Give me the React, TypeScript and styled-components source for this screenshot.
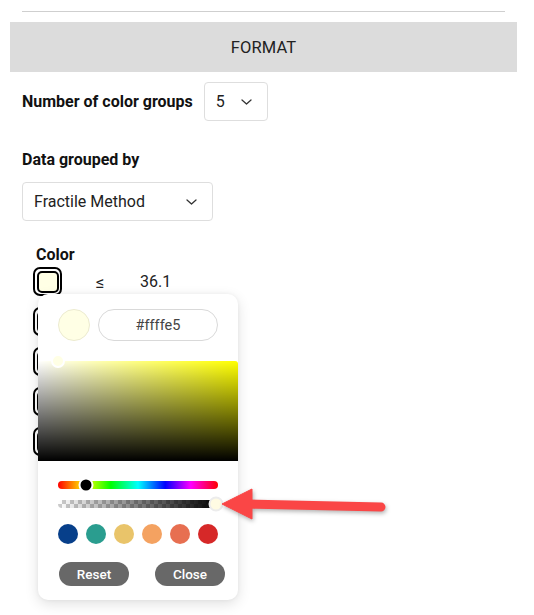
import React from "react";
import styled, { createGlobalStyle } from "styled-components";

const Global = createGlobalStyle`
  html, body { margin: 0; padding: 0; background: #fff; }
  body { font-family: Roboto, "Liberation Sans", Arial, sans-serif; color: #1a1a1a; }
`;

const Page = styled.div`
  position: relative;
  width: 534px;
  height: 615px;
  overflow: hidden;
  padding-top: 11px;
  box-sizing: border-box;
`;

const Rule = styled.div`
  height: 1px;
  background: #cfcfcf;
  margin: 0 29px 0 22px;
`;

const Header = styled.div`
  margin: 10px 17px 0 10px;
  height: 50px;
  background: #dcdcdc;
  display: flex;
  align-items: center;
  justify-content: center;
  font-size: 16.5px;
  color: #222;
  letter-spacing: 0.1px;
`;

const Body = styled.div`
  padding: 10px 0 0 22px;
  display: flex;
  flex-direction: column;
`;

const InlineRow = styled.div`
  display: flex;
  align-items: center;
  gap: 11px;
`;

const Label = styled.div<{ $indent?: number }>`
  font-weight: 700;
  font-size: 16px;
  color: #111;
  line-height: 20px;
  margin-left: ${(p) => p.$indent ?? 0}px;
`;

const Select = styled.div<{ $w: number }>`
  width: ${(p) => p.$w}px;
  height: 39px;
  box-sizing: border-box;
  border: 1px solid #dedede;
  border-radius: 4px;
  display: flex;
  align-items: center;
  justify-content: space-between;
  padding: 0 15px 0 11px;
  font-size: 16px;
  color: #222;
`;

const Chevron = () => (
  <svg width="11" height="6" viewBox="0 0 11 6" fill="none">
    <path d="M1 1l4.5 4L10 1" stroke="#333" strokeWidth="1.3" strokeLinecap="round" strokeLinejoin="round" />
  </svg>
);

const Section = styled.div<{ $top: number; $gap: number }>`
  margin-top: ${(p) => p.$top}px;
  display: flex;
  flex-direction: column;
  gap: ${(p) => p.$gap}px;
`;

const ColorList = styled.div`
  display: flex;
  flex-direction: column;
  gap: 11px;
  margin-left: 11px;
`;

const SwatchRow = styled.div`
  display: flex;
  align-items: center;
  height: 29px;
`;

const Swatch = styled.div<{ $c: string }>`
  width: 29px;
  height: 29px;
  box-sizing: border-box;
  border: 2px solid #000;
  border-radius: 7px;
  padding: 1.5px;
  background: #fff;
  flex: none;
  &::after {
    content: "";
    display: block;
    width: 100%;
    height: 100%;
    box-sizing: border-box;
    border: 2px solid #000;
    border-radius: 5px;
    background: ${(p) => p.$c};
  }
`;

const Le = styled.span`
  margin-left: 34px;
  font-size: 17px;
  width: 10px;
  color: #222;
`;

const Value = styled.span`
  margin-left: 34px;
  font-size: 16px;
  color: #222;
`;

const Popup = styled.div`
  position: absolute;
  left: 38px;
  top: 294px;
  width: 200px;
  height: 306px;
  background: #fff;
  border-radius: 10px;
  box-shadow: 0 4px 14px rgba(0, 0, 0, 0.12), 0 0 4px rgba(0, 0, 0, 0.05);
  display: flex;
  flex-direction: column;
`;

const PopTop = styled.div`
  display: flex;
  align-items: center;
  gap: 8px;
  padding: 15px 20px 0 20px;
  height: 32px;
`;

const Preview = styled.div<{ $c: string }>`
  width: 32px;
  height: 32px;
  border-radius: 50%;
  box-sizing: border-box;
  border: 1px solid #ecebd0;
  background: ${(p) => p.$c};
  flex: none;
`;

const HexInput = styled.div`
  flex: 1;
  height: 32px;
  box-sizing: border-box;
  border: 1px solid #d9d9d9;
  border-radius: 16px;
  display: flex;
  align-items: center;
  justify-content: center;
  font-size: 14.5px;
  color: #444;
`;

const Saturation = styled.div`
  position: relative;
  margin-top: 20px;
  height: 100px;
  border-top-right-radius: 3px;
  background: linear-gradient(to top, #000, rgba(0, 0, 0, 0)),
    linear-gradient(to right, #fff, rgba(255, 255, 255, 0)), #ffff00;
`;

const Pointer = styled.div<{ $c: string; $size: number; $ring: string }>`
  position: absolute;
  width: ${(p) => p.$size}px;
  height: ${(p) => p.$size}px;
  border-radius: 50%;
  box-sizing: border-box;
  background: ${(p) => p.$c};
  border: 2px solid ${(p) => p.$ring};
  transform: translate(-50%, -50%);
`;

const Sliders = styled.div`
  display: flex;
  flex-direction: column;
  gap: 11px;
  padding: 20px 20px 0 20px;
`;

const Track = styled.div<{ $bg: string }>`
  position: relative;
  height: 8px;
  border-radius: 4px;
  background: ${(p) => p.$bg};
`;

const hue =
  "linear-gradient(to right, #f00 0%, #ff0 17%, #0f0 33%, #0ff 50%, #00f 67%, #f0f 83%, #f00 100%)";
const alpha =
  "linear-gradient(to right, rgba(0,0,0,0), #000), repeating-conic-gradient(#ccc 0% 25%, #fff 0% 50%) 0 0 / 8px 8px";

const Presets = styled.div`
  display: flex;
  gap: 8px;
  padding: 16px 20px 0 20px;
`;

const Dot = styled.div<{ $c: string }>`
  width: 20px;
  height: 20px;
  border-radius: 50%;
  background: ${(p) => p.$c};
`;

const Buttons = styled.div`
  display: flex;
  justify-content: space-between;
  padding: 18px 13px 0 21px;
`;

const Btn = styled.div`
  width: 70px;
  height: 24px;
  border-radius: 12px;
  background: #686868;
  color: #fff;
  font-size: 13.5px;
  font-weight: 500;
  display: flex;
  align-items: center;
  justify-content: center;
`;

const ArrowSvg = styled.svg`
  position: absolute;
  left: 215px;
  top: 480px;
  overflow: visible;
  filter: drop-shadow(1px 2px 2px rgba(0, 0, 0, 0.3));
`;

const rows = [
  { c: "#ffffe5", v: "36.1" },
  { c: "#fff", v: "" },
  { c: "#fff", v: "" },
  { c: "#fff", v: "" },
  { c: "#fff", v: "" },
];

export default function App() {
  return (
    <Page>
      <Global />
      <Rule />
      <Header>FORMAT</Header>
      <Body>
        <InlineRow>
          <Label>Number of color groups</Label>
          <Select $w={64}>
            <span>5</span>
            <Chevron />
          </Select>
        </InlineRow>
        <Section $top={29} $gap={12}>
          <Label>Data grouped by</Label>
          <Select $w={191}>
            <span>Fractile Method</span>
            <Chevron />
          </Select>
        </Section>
        <Section $top={24} $gap={2}>
          <Label $indent={14}>Color</Label>
          <ColorList>
            {rows.map((r, i) => (
              <SwatchRow key={i}>
                <Swatch $c={r.c} />
                {r.v && (
                  <>
                    <Le>≤</Le>
                    <Value>{r.v}</Value>
                  </>
                )}
              </SwatchRow>
            ))}
          </ColorList>
        </Section>
      </Body>
      <Popup>
        <PopTop>
          <Preview $c="#ffffe5" />
          <HexInput>#ffffe5</HexInput>
        </PopTop>
        <Saturation>
          <Pointer $c="#ffffe5" $size={14} $ring="#fff" style={{ left: 20, top: 0 }} />
        </Saturation>
        <Sliders>
          <Track $bg={hue}>
            <Pointer $c="#000" $size={15} $ring="#fff" style={{ left: 28, top: 4 }} />
          </Track>
          <Track $bg={alpha}>
            <Pointer $c="#fffbe3" $size={15} $ring="#ececec" style={{ left: 158, top: 4 }} />
          </Track>
        </Sliders>
        <Presets>
          {["#073f8a", "#2a9d8f", "#e9c46a", "#f4a261", "#e76f51", "#d62828"].map((c) => (
            <Dot key={c} $c={c} />
          ))}
        </Presets>
        <Buttons>
          <Btn>Reset</Btn>
          <Btn>Close</Btn>
        </Buttons>
      </Popup>
      <ArrowSvg width="175" height="45" viewBox="0 0 175 45">
        <line x1="30" y1="24" x2="166" y2="27" stroke="#fa4646" strokeWidth="9" strokeLinecap="round" />
        <polygon points="7,24 37,9 37,39" fill="#fa4646" strokeLinejoin="round" stroke="#fa4646" strokeWidth="1" />
      </ArrowSvg>
    </Page>
  );
}
